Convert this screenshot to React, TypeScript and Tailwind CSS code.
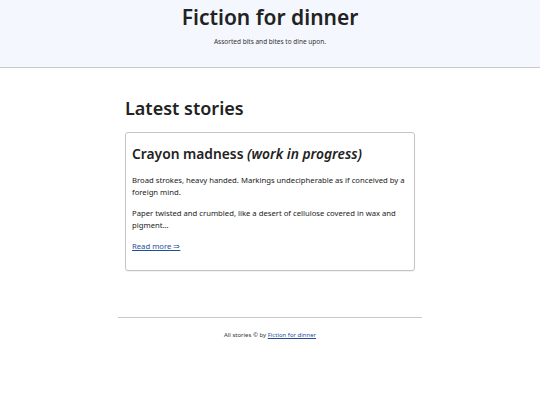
export default function App() {
  return (
    <div className="min-h-[405px] bg-white text-[#222] font-['Noto_Sans',sans-serif]">
      <header className="h-[68px] border-b border-[#c8c8d0] bg-[#f5f7fe] pt-[3px] text-center">
        <h1 className="text-[21px] font-semibold leading-[28px]">Fiction for dinner</h1>
        <p className="mt-[6px] text-[6.5px] leading-[10px] text-[#333]">Assorted bits and bites to dine upon.</p>
      </header>

      <main className="mx-auto w-[290px] pt-[26px]">
        <h2 className="text-[18px] font-semibold leading-[28px]">Latest stories</h2>
        <article className="mt-[10px] h-[139px] rounded-[3px] border border-[#c4c4c8] px-[6px] pt-[11px] shadow-[0_1px_1px_rgba(0,0,0,0.06)]">
          <h3 className="text-[13.8px] font-semibold leading-[20px]">
            Crayon madness <em>(work in progress)</em>
          </h3>
          <p className="mt-[10px] text-[7.7px] leading-[12px] text-[#222]">
            Broad strokes, heavy handed. Markings undecipherable as if conceived by a foreign mind.
          </p>
          <p className="mt-[9px] text-[7.7px] leading-[12px] text-[#222]">
            Paper twisted and crumbled, like a desert of cellulose covered in wax and pigment…
          </p>
          <p className="mt-[9px] text-[7.7px] leading-[12px]">
            <a href="#" className="text-[#1f4f9a] underline">Read more ⇒</a>
          </p>
        </article>
      </main>

      <footer className="mx-auto mt-[46px] w-[304px] border-t border-[#c8c8cc] pt-[13px] text-center text-[6px] leading-[8px] text-[#333]">
        All stories © by <a href="#" className="text-[#1f4f9a] underline">Fiction for dinner</a>
      </footer>
    </div>
  );
}
